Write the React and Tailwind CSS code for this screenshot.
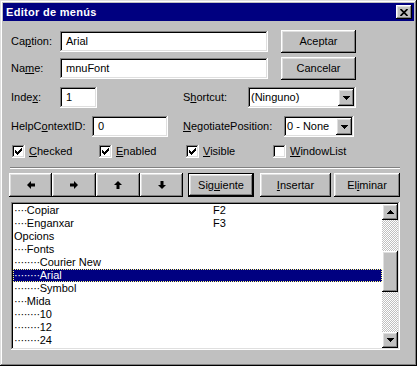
import React from 'react';

// classic 3D bevels
const raised = "shadow-[inset_-1px_-1px_#000,inset_1px_1px_#fff,inset_-2px_-2px_#808080,inset_2px_2px_#dfdfdf]";
const sunken = "shadow-[inset_-1px_-1px_#fff,inset_1px_1px_#808080,inset_-2px_-2px_#dfdfdf,inset_2px_2px_#000]";
const defaultBtn = "shadow-[inset_0_0_0_1px_#000,inset_-2px_-2px_#000,inset_2px_2px_#fff,inset_-3px_-3px_#808080,inset_3px_3px_#dfdfdf]";

const K = ({ children }) => <u className="underline-offset-[1px]">{children}</u>;

const Button = ({ w, children, isDefault, className = '' }) => (
  <div className={`h-full ${w} ${isDefault ? defaultBtn : raised} bg-[#c0c0c0] flex items-center justify-center ${className}`}>
    {children}
  </div>
);

const TextBox = ({ w, value }) => (
  <div className={`h-[21px] ${w} ${sunken} bg-white flex items-center pl-[6px]`}>{value}</div>
);

const DownTri = () => (
  <svg width="7" height="4" viewBox="0 0 7 4" shapeRendering="crispEdges"><polygon points="0,0 7,0 3.5,4" fill="#000" /></svg>
);

const UpTri = () => (
  <svg width="7" height="4" viewBox="0 0 7 4" shapeRendering="crispEdges"><polygon points="0,4 7,4 3.5,0" fill="#000" /></svg>
);

const Combo = ({ w, value }) => (
  <div className={`h-[21px] ${w} ${sunken} bg-white flex items-center pl-[3px] pr-[2px]`}>
    <span className="flex-1">{value}</span>
    <div className={`w-[16px] h-[17px] ${raised} bg-[#c0c0c0] flex items-center justify-center`}>
      <DownTri />
    </div>
  </div>
);

const Check = ({ checked, children }) => (
  <div className="w-[87px] flex items-center">
    <div className={`w-[13px] h-[13px] ${sunken} bg-white flex items-center justify-center`}>
      {checked && (
        <svg width="7" height="7" viewBox="0 0 7 7" shapeRendering="crispEdges">
          <polygon points="0,2 2,4 7,-1 7,2 2,7 0,5" fill="#000" />
        </svg>
      )}
    </div>
    <span className="ml-[4px]">{children}</span>
  </div>
);

const Arrow = ({ dir }) => {
  const pts = {
    left: "0,4 4,0 4,2.5 8,2.5 8,5.5 4,5.5 4,8",
    right: "8,4 4,0 4,2.5 0,2.5 0,5.5 4,5.5 4,8",
    up: "4,0 8,4 5.5,4 5.5,8 2.5,8 2.5,4 0,4",
    down: "4,8 8,4 5.5,4 5.5,0 2.5,0 2.5,4 0,4",
  }[dir];
  return (
    <svg width="8" height="8" viewBox="0 0 8 8"><polygon points={pts} fill="#000" /></svg>
  );
};

const items = [
  { d: 1, t: 'Copiar', k: 'F2' },
  { d: 1, t: 'Enganxar', k: 'F3' },
  { d: 0, t: 'Opcions' },
  { d: 1, t: 'Fonts' },
  { d: 2, t: 'Courier New' },
  { d: 2, t: 'Arial', sel: true },
  { d: 2, t: 'Symbol' },
  { d: 1, t: 'Mida' },
  { d: 2, t: '10' },
  { d: 2, t: '12' },
  { d: 2, t: '24' },
];

const checker = "bg-[repeating-conic-gradient(#c0c0c0_0%_25%,#fff_0%_50%)] bg-[length:2px_2px]";

export default function App() {
  return (
    <div className="w-[417px] h-[366px] bg-[#c0c0c0] p-[3px] flex flex-col text-[11px] leading-[13px] text-black font-['Liberation_Sans',Arial,sans-serif] shadow-[inset_-1px_-1px_#000,inset_1px_1px_#dfdfdf,inset_-2px_-2px_#808080,inset_2px_2px_#fff]">
      {/* title bar */}
      <div className="h-[18px] bg-[#000080] flex items-center pl-[3px] pr-[2px]">
        <span className="flex-1 text-white font-bold tracking-[0.3px]">Editor de menús</span>
        <div className={`w-[16px] h-[14px] ${raised} bg-[#c0c0c0] flex items-center justify-center`}>
          <svg width="8" height="7" viewBox="0 0 8 7">
            <path d="M0.5 0 L7.5 7 M7.5 0 L0.5 7" stroke="#000" strokeWidth="1.7" />
          </svg>
        </div>
      </div>

      {/* Caption */}
      <div className="mt-[9px] h-[23px] flex items-center pl-[8px]">
        <span className="w-[49px]">Ca<K>p</K>tion:</span>
        <TextBox w="w-[208px]" value="Arial" />
        <Button w="w-[75px]" className="ml-[13px]">Aceptar</Button>
      </div>

      {/* Name */}
      <div className="mt-[4px] h-[23px] flex items-center pl-[8px]">
        <span className="w-[49px]">Na<K>m</K>e:</span>
        <TextBox w="w-[208px]" value="mnuFont" />
        <Button w="w-[75px]" className="ml-[13px]">Cancelar</Button>
      </div>

      {/* Index / Shortcut */}
      <div className="mt-[7px] h-[21px] flex items-center pl-[8px]">
        <span className="w-[49px]">Inde<K>x</K>:</span>
        <TextBox w="w-[37px]" value="1" />
        <span className="ml-[86px] w-[65px]">S<K>h</K>ortcut:</span>
        <Combo w="w-[108px]" value="(Ninguno)" />
      </div>

      {/* HelpContextID / NegotiatePosition */}
      <div className="mt-[8px] h-[21px] flex items-center pl-[8px]">
        <span className="w-[81px]">HelpC<K>o</K>ntextID:</span>
        <TextBox w="w-[76px]" value="0" />
        <span className="ml-[15px] w-[101px]"><K>N</K>egotiatePosition:</span>
        <Combo w="w-[70px]" value="0 - None" />
      </div>

      {/* checkboxes */}
      <div className="mt-[8px] h-[13px] flex items-center pl-[9px]">
        <Check checked><K>C</K>hecked</Check>
        <Check checked><K>E</K>nabled</Check>
        <Check checked><K>V</K>isible</Check>
        <Check><K>W</K>indowList</Check>
      </div>

      {/* separator */}
      <div className="mt-[9px] ml-[7px] w-[390px] border-t border-t-[#808080] border-b border-b-white" />

      {/* buttons */}
      <div className="mt-[4px] h-[24px] flex ml-[6px]">
        <Button w="w-[43px]"><Arrow dir="left" /></Button>
        <Button w="w-[44px]"><Arrow dir="right" /></Button>
        <Button w="w-[44px]"><Arrow dir="up" /></Button>
        <Button w="w-[43px]"><Arrow dir="down" /></Button>
        <Button w="w-[66px]" isDefault className="ml-[5px]">Sig<K>u</K>iente</Button>
        <Button w="w-[71px]" className="ml-[6px]"><K>I</K>nsertar</Button>
        <Button w="w-[66px]" className="ml-[3px]">El<K>i</K>minar</Button>
      </div>

      {/* menu list */}
      <div className={`mt-[5px] ml-[8px] w-[389px] h-[148px] ${sunken} bg-white p-[2px] flex`}>
        <div className="flex-1 flex flex-col">
          {items.map((it, i) => (
            <div
              key={i}
              className={`h-[13px] flex items-center whitespace-pre ${it.sel ? 'bg-[#000080] text-white outline-1 outline-dotted outline-[#ffff80] -outline-offset-1' : ''}`}
            >
              <span className="w-[200px] pl-[1px]">
                <span className="tracking-[-0.45px]">{'····'.repeat(it.d)}</span>
                {it.t}
              </span>
              {it.k && <span>{it.k}</span>}
            </div>
          ))}
        </div>
        <div className="w-[16px] flex flex-col">
          <div className={`h-[16px] ${raised} bg-[#c0c0c0] flex items-center justify-center`}><UpTri /></div>
          <div className={`h-[31px] ${checker}`} />
          <div className={`h-[41px] ${raised} bg-[#c0c0c0]`} />
          <div className={`flex-1 ${checker}`} />
          <div className={`h-[16px] ${raised} bg-[#c0c0c0] flex items-center justify-center`}><DownTri /></div>
        </div>
      </div>
    </div>
  );
}
